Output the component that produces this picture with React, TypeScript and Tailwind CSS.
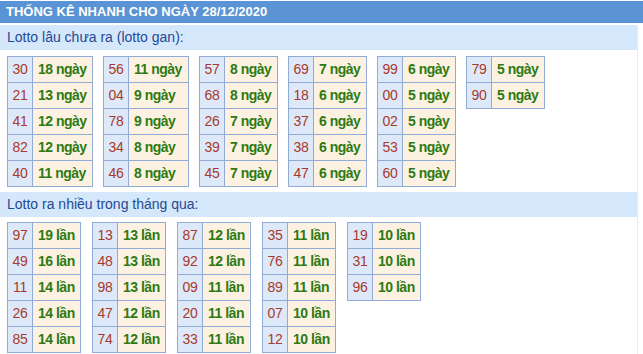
const gan: [string, string][][] = [
  [['30', '18'], ['21', '13'], ['41', '12'], ['82', '12'], ['40', '11']],
  [['56', '11'], ['04', '9'], ['78', '9'], ['34', '8'], ['46', '8']],
  [['57', '8'], ['68', '8'], ['26', '7'], ['39', '7'], ['45', '7']],
  [['69', '7'], ['18', '6'], ['37', '6'], ['38', '6'], ['47', '6']],
  [['99', '6'], ['00', '5'], ['02', '5'], ['53', '5'], ['60', '5']],
  [['79', '5'], ['90', '5']],
];

const nhieu: [string, string][][] = [
  [['97', '19'], ['49', '16'], ['11', '14'], ['26', '14'], ['85', '14']],
  [['13', '13'], ['48', '13'], ['98', '13'], ['47', '12'], ['74', '12']],
  [['87', '12'], ['92', '12'], ['09', '11'], ['20', '11'], ['33', '11']],
  [['35', '11'], ['76', '11'], ['89', '11'], ['07', '10'], ['12', '10']],
  [['19', '10'], ['31', '10'], ['96', '10']],
];

// value column width depends on the widest label in the box
function valueWidth(rows: [string, string][], unit: string) {
  if (unit === 'lần') return 'w-[48px]';
  return rows.some(([, c]) => c.length > 1) ? 'w-[60px]' : 'w-[53px]';
}

function StatTable({ rows, unit }: { rows: [string, string][]; unit: string }) {
  const vw = valueWidth(rows, unit);
  return (
    <div className="flex flex-col self-start border-l border-t border-[#8fabd6]">
      {rows.map(([num, count]) => (
        <div key={num} className="flex h-[26px]">
          <div className="flex w-[25px] items-center justify-center border-b border-r border-[#8fabd6] bg-[#dde9f8] text-[14px] tracking-[-0.3px] text-[#a8392c]">
            {num}
          </div>
          <div
            className={`${vw} flex items-center whitespace-nowrap border-b border-r border-[#8fabd6] bg-[#fdf2e2] pl-[5px] text-[14px] font-bold tracking-[-0.5px] text-[#2d7a14]`}
          >
            {count} {unit}
          </div>
        </div>
      ))}
    </div>
  );
}

function Section({
  title,
  groups,
  unit,
  top,
  gap,
}: {
  title: string;
  groups: [string, string][][];
  unit: string;
  top: string;
  gap: string;
}) {
  return (
    <div>
      <div className="flex h-[25px] items-center bg-[#d5e7fa] pl-[7px] text-[14px] text-[#1f4a94]">{title}</div>
      <div className={`flex pl-[7px] pb-[5px] ${top} ${gap}`}>
        {groups.map((g, i) => (
          <StatTable key={i} rows={g} unit={unit} />
        ))}
      </div>
    </div>
  );
}

export default function App() {
  return (
    <div className="h-[354px] w-[643px] overflow-hidden bg-white pt-[1px] font-['Liberation_Sans',Arial,sans-serif]">
      <div className="flex h-[22px] items-center bg-[#5a94d4] pl-[6px] text-[13px] font-bold text-white">
        THỐNG KÊ NHANH CHO NGÀY 28/12/2020
      </div>
      <div className="mt-[2px] w-[638px] border-r border-[#e3edf8]">
        <Section title="Lotto lâu chưa ra (lotto gan):" groups={gan} unit="ngày" top="pt-[6px]" gap="gap-[10px]" />
        <Section title="Lotto ra nhiều trong tháng qua:" groups={nhieu} unit="lần" top="pt-[5px]" gap="gap-[11px]" />
      </div>
    </div>
  );
}
